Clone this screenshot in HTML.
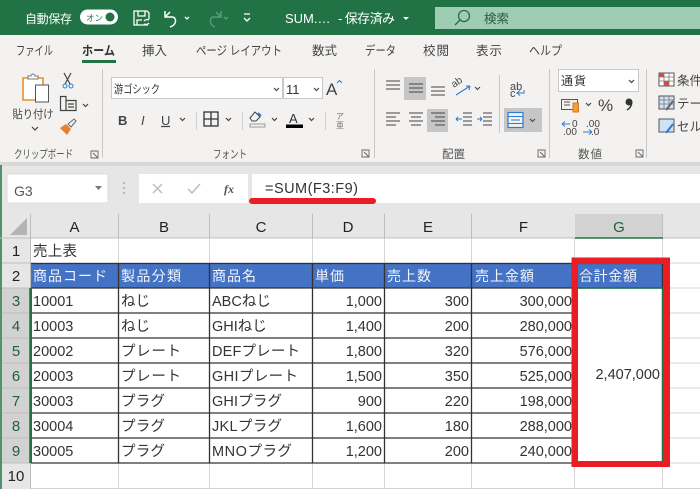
<!DOCTYPE html>
<html lang="ja"><head><meta charset="utf-8"><title>SUM</title>
<style>
html,body{margin:0;padding:0;background:#fff}
svg{display:block}
text{font-family:"Liberation Sans","Noto Sans CJK JP",sans-serif;fill:#333}
.t{font-size:12.5px;fill:#444}
.w{fill:#fff}
.c{font-size:14.5px;fill:#333}
.h{font-size:14px;fill:#f2f5fb}
.ch{font-size:15px;fill:#222;text-anchor:middle}
.rg{fill:#1f6040}
.ic{fill:none;stroke:#444;stroke-width:1.2}
</style></head><body>
<svg width="700" height="489" viewBox="0 0 700 489" xmlns="http://www.w3.org/2000/svg">
<rect width="700" height="489" fill="#e6e6e6"/>
<!-- title bar -->
<rect width="700" height="35" fill="#217346"/>
<rect x="435" y="7" width="265" height="22" fill="#9fcdb3"/>
<text class="w" x="25" y="23" style="font-size:12px" textLength="47">自動保存</text>
<rect x="80" y="9.500" width="38" height="15" rx="7.500" fill="#fff"/>
<text x="86" y="21" style="font-size:8.500px;fill:#217346">オン</text>
<circle cx="110" cy="17" r="4.500" fill="#217346"/>
<g fill="none" stroke="#fff" stroke-width="1.300">
<path d="M148 25H134V11H147L149 13V19M138 11V16H145V11M137 25V20H142"/>
<path d="M144 24a4 4 0 0 0 5 -1M144 21a4 4 0 0 1 5 -1"/>
<path d="M165 11V17H172C177 17 177 25 170 27M165 17L170 12" stroke-width="1.500"/>
<path d="M185 17l2 2 2-2M244 14h6M244 18l3 3 3-3"/>
<path d="M221 11V17H214C209 17 209 25 215 27M221 17L216 12" stroke="#5d9a78" stroke-width="1.500"/>
<path d="M224 17l2 2 2-2" stroke="#5d9a78"/>
</g>
<text class="w" x="285" y="23" style="font-size:13px">SUM.…</text>
<text class="w" x="338" y="23" style="font-size:13px" textLength="57">- 保存済み</text>
<path d="M403 17h6l-3 3z" fill="#fff"/>
<circle cx="464" cy="16" r="5.500" fill="none" stroke="#2f6b4a" stroke-width="1.300"/>
<path d="M460 20l-5 5" stroke="#2f6b4a" stroke-width="1.400"/>
<text x="484" y="23" style="font-size:12.500px;fill:#2f5b43">検索</text>

<!-- ribbon -->
<rect y="35" width="700" height="127" fill="#f3f2f1"/>
<rect y="162" width="700" height="4" fill="#d9d8d7"/>
<rect y="166" width="700" height="48" fill="#e7e6e6"/>
<text class="t" x="16" y="55" textLength="37" lengthAdjust="spacingAndGlyphs">ファイル</text>
<text x="82" y="55" style="font-size:12.500px;font-weight:700;fill:#333" textLength="33" lengthAdjust="spacingAndGlyphs">ホーム</text>
<rect x="82" y="60" width="34" height="3" fill="#217346"/>
<text class="t" x="142" y="55" textLength="25">挿入</text>
<text class="t" x="196" y="55" textLength="86" lengthAdjust="spacingAndGlyphs">ページ レイアウト</text>
<text class="t" x="312" y="55" textLength="25">数式</text>
<text class="t" x="365" y="55" textLength="31" lengthAdjust="spacingAndGlyphs">データ</text>
<text class="t" x="423" y="55" textLength="26">校閲</text>
<text class="t" x="476" y="55" textLength="26">表示</text>
<text class="t" x="529" y="55" textLength="33" lengthAdjust="spacingAndGlyphs">ヘルプ</text>

<!-- separators -->
<g stroke="#c8c8c8" stroke-width="1"><path d="M102.500 69V158M374.500 69V158M549.500 69V158M646.500 69V158M499.500 75V133"/></g>

<!-- clipboard -->
<path d="M23 78H43V100H23Z" fill="#fff" stroke="#e8912c" stroke-width="1.600"/>
<path d="M28 79V76H31a2 2 0 0 1 4 0h3V79Z" fill="#fff" stroke="#777"/>
<rect x="35.500" y="85" width="13" height="17" fill="#fff" stroke="#555"/>
<text x="12.500" y="118" style="font-size:11.500px;fill:#444" textLength="41" lengthAdjust="spacingAndGlyphs">貼り付け</text>
<path d="M32 127l3 3 3-3M83 104l2.500 2.500 2.500-2.500" class="ic"/>
<path d="M64 73l6 11M71 73l-6 11" class="ic"/>
<circle cx="65" cy="86" r="2" fill="none" stroke="#2b7cd3"/><circle cx="71" cy="86" r="2" fill="none" stroke="#2b7cd3"/>
<path d="M60.500 96.500H66V110.500H60.500ZM66 100.500H76V110.500H66ZM68 104H74M68 107H74" class="ic"/>
<path d="M60 128l6-4 5 5-4 6z" fill="#e8812c"/><path d="M68 124l6-5 2 2-5 6z" fill="none" stroke="#666"/>
<text x="14" y="158" style="font-size:11.500px;fill:#555" textLength="59" lengthAdjust="spacingAndGlyphs">クリップボード</text>
<path d="M91 151h7v7h-7zM93 153l5 5" fill="none" stroke="#666" stroke-width=".900"/>

<!-- font -->
<rect x="111.500" y="77.500" width="171" height="21" fill="#fff" stroke="#c8c8c8"/>
<rect x="283.500" y="77.500" width="39" height="21" fill="#fff" stroke="#c8c8c8"/>
<text x="114" y="93" style="font-size:11.500px;fill:#333" textLength="46" lengthAdjust="spacingAndGlyphs">游ゴシック</text>
<text x="286" y="94" style="font-size:13px;fill:#333">11</text>
<path d="M274 88l2.500 2.500 2.500-2.500M314 88l2.500 2.500 2.500-2.500" class="ic"/>
<text x="326" y="95" style="font-size:17px;fill:#444">A</text>
<path d="M337 83l2.500-2.500 2.500 2.500" fill="none" stroke="#2b7cd3"/>
<text x="118" y="125" style="font-size:13px;font-weight:700;fill:#444">B</text>
<text x="141" y="125" style="font-size:13px;font-style:italic;fill:#444">I</text>
<text x="161" y="125" style="font-size:13px;fill:#444">U</text>
<path d="M161 126.500h9M180 118l2.500 2.500 2.500-2.500M226 118l2.500 2.500 2.500-2.500M272 118l2.500 2.500 2.500-2.500M309 118l2.500 2.500 2.500-2.500" class="ic"/>
<rect x="204" y="112" width="14" height="14" fill="none" stroke="#333" stroke-width="1.300"/>
<path d="M211 112V126M204 119H218" stroke="#333" stroke-width="1.300"/>
<path d="M250 118l5-6 5 5-4 4h-4z" fill="none" stroke="#444"/><path d="M258 113l3 3" stroke="#2b7cd3" stroke-width="2"/>
<rect x="250" y="124" width="15" height="3" fill="#f3f2f1" stroke="#999"/>
<text x="289" y="123" style="font-size:13px;fill:#333">A</text>
<rect x="286" y="124.500" width="17" height="3.500" fill="#000"/>
<text x="336" y="119" style="font-size:8px;fill:#777">ア</text><text x="336" y="128" style="font-size:8px;fill:#777">亜</text>
<path d="M196.500 112V130M242.500 112V130M325.500 112V130" stroke="#d0d0d0"/>
<text x="213" y="158" style="font-size:11.500px;fill:#555" textLength="34" lengthAdjust="spacingAndGlyphs">フォント</text>
<path d="M362 150h7v7h-7zM364 152l5 5" fill="none" stroke="#666" stroke-width=".900"/>

<!-- alignment -->
<rect x="404" y="77" width="22" height="23" fill="#c6c6c6"/>
<rect x="427" y="109" width="21" height="23" fill="#c6c6c6"/>
<g stroke="#444" stroke-width="1.100" fill="none">
<path d="M386 81h14M386 85h14M386 89h14M409 84h14M409 88h14M409 92h14M431 87h14M431 91h14M431 95h14"/>
<path d="M386 113h14M386 117h10M386 121h14M386 125h10M409 113h14M411 117h10M409 121h14M411 125h10M431 113h14M435 117h10M431 121h14M435 125h10"/>
<path d="M463 113h9M463 117h9M463 121h9M463 125h9M483 113h9M483 117h9M483 121h9M483 125h9"/>
<path d="M456 119h6M456 119l2-2M456 119l2 2M477 119h5M482 119l-2-2M482 119l-2 2" stroke="#2b7cd3"/>
<path d="M456 95l14-9M470 86h-4M470 86l-1 4" stroke="#2b7cd3"/>
<path d="M475 87l2.500 2.500 2.500-2.500"/>
</g>
<text x="454" y="88" transform="rotate(-35 454 88)" style="font-size:10px;fill:#444">ab</text>
<text x="510" y="90" style="font-size:11px;fill:#444">ab</text>
<text x="510" y="97" style="font-size:11px;fill:#444">c</text>
<path d="M524 90v3h-7l3-2.500M517 93l3 2.500" fill="none" stroke="#2b7cd3"/>
<rect x="504" y="108" width="38" height="24" fill="#c6c6c6"/>
<rect x="508" y="112.500" width="15" height="15" fill="#f3f2f1" stroke="#2b7cd3" stroke-width="1.200"/>
<path d="M508 116.500h15M508 123.500h15M511 120h9" stroke="#2b7cd3"/>
<path d="M530 119l2.500 2.500 2.500-2.500" fill="none" stroke="#444" stroke-width="1.100"/>
<text x="442" y="158" style="font-size:11.500px;fill:#555" textLength="23">配置</text>
<path d="M538 150h7v7h-7zM540 152l5 5" fill="none" stroke="#666" stroke-width=".900"/>

<!-- number -->
<rect x="558.500" y="69.500" width="80" height="22" fill="#fff" stroke="#c8c8c8"/>
<text x="561" y="85" style="font-size:12px;fill:#333" textLength="25">通貨</text>
<path d="M629 80l2.500 2.500 2.500-2.500M586 103l2.500 2.500 2.500-2.500" class="ic"/>
<rect x="561.500" y="99.500" width="16" height="10" fill="none" stroke="#555"/>
<path d="M564 102h6M564 105h6" stroke="#555"/>
<rect x="573" y="103" width="5.500" height="9" fill="#f0a030" stroke="#d9762a"/>
<text x="598" y="111" style="font-size:17px;fill:#444">%</text>
<circle cx="629" cy="102" r="3.500" fill="#333"/>
<path d="M631.500 102c.5 3-1.500 6.500-4.500 8" fill="none" stroke="#333" stroke-width="1.500"/>
<text x="572" y="127" style="font-size:10px;fill:#444">0</text><text x="563" y="135" style="font-size:10px;fill:#444">.00</text>
<text x="586" y="127" style="font-size:10px;fill:#444">.00</text><text x="591" y="135" style="font-size:10px;fill:#444">.0</text>
<path d="M562 124h8M562 124l3-2.500M562 124l3 2.500M583 132h9M592 132l-3-2.500M592 132l-3 2.500" fill="none" stroke="#2b7cd3"/>
<text x="578" y="158" style="font-size:11.500px;fill:#555" textLength="24">数値</text>
<path d="M636 150h7v7h-7zM638 152l5 5" fill="none" stroke="#666" stroke-width=".900"/>

<!-- styles -->
<rect x="659" y="73" width="15" height="13" fill="#fff" stroke="#555"/>
<rect x="659" y="73" width="5" height="4" fill="#e94040"/><rect x="664" y="81" width="5" height="5" fill="#e94040"/>
<path d="M664 73V86M669 73V86M659 77H674M659 81H674" stroke="#777" stroke-width=".800"/>
<rect x="659" y="96" width="15" height="13" fill="#cfe2f5" stroke="#555"/>
<path d="M664 96V109M669 96V109M659 100H674M659 104H674" stroke="#777" stroke-width=".800"/>
<path d="M666 110l7-9" stroke="#666" stroke-width="2"/>
<rect x="659" y="119" width="15" height="13" fill="#cfe2f5" stroke="#555"/>
<path d="M666 133l7-9" stroke="#2b7cd3" stroke-width="2"/>
<text x="677" y="85" style="font-size:12.500px;fill:#444">条件</text>
<text x="677" y="108" style="font-size:12.500px;fill:#444">テーブ</text>
<text x="677" y="131" style="font-size:12.500px;fill:#444">セルの</text>

<!-- formula bar -->
<rect x="7" y="174" width="101" height="29" fill="#fff" stroke="#dcdcdc"/>
<text x="14" y="196" style="font-size:14px;fill:#555">G3</text>
<path d="M95 186h7l-3.500 4z" fill="#777"/>
<g fill="#aaa"><circle cx="124" cy="183" r="1"/><circle cx="124" cy="188" r="1"/><circle cx="124" cy="193" r="1"/></g>
<rect x="139" y="174" width="109" height="29" fill="#fff"/>
<path d="M153 184l9 9M162 184l-9 9" stroke="#bdbdbd" stroke-width="1.500"/>
<path d="M188 189l4 4 8-9" fill="none" stroke="#bdbdbd" stroke-width="1.500"/>
<text x="224" y="193" style="font-size:12px;font-style:italic;font-weight:700;fill:#555;font-family:'Liberation Serif',serif">fx</text>
<rect x="252" y="174" width="448" height="29" fill="#fff"/>
<text x="265" y="193" style="font-size:14.500px;fill:#333" textLength="93">=SUM(F3:F9)</text>
<rect x="249" y="198" width="127" height="6" rx="3" fill="#ea1c24"/>

<!-- sheet -->
<rect y="214" width="700" height="275" fill="#fff"/>
<rect y="214" width="700" height="24" fill="#e6e6e6"/>
<rect x="0" y="238" width="31" height="251" fill="#e6e6e6"/>
<rect x="2" y="288" width="28.500" height="175" fill="#d2d2d2"/>
<rect x="575" y="214" width="88" height="24" fill="#d2d2d2"/>
<rect x="0" y="165" width="2" height="324" fill="#217346" opacity=".75"/>
<path d="M10 235H27V218Z" fill="#b4b4b4"/>

<!-- light grid -->
<g stroke="#d4d4d4" stroke-width="1">
<path d="M118.500 238V263M209.500 238V263M312.500 238V263M384.500 238V263M471.500 238V263M574.500 238V263M662.500 238V489"/>
<path d="M118.500 463V489M209.500 463V489M312.500 463V489M384.500 463V489M471.500 463V489M574.500 463V489"/>
<path d="M31 263H700M663 288H700M663 313H700M663 338H700M663 363H700M663 388H700M663 413H700M663 438H700M663 463H700M31 488.500H700"/>
</g>
<g stroke="#bdbdbd" stroke-width="1">
<path d="M30.500 214V489M118.500 214V238M209.500 214V238M312.500 214V238M384.500 214V238M471.500 214V238M662.500 214V238M0 238H700M2 263H30M2 288H30M2 313H30M2 338H30M2 363H30M2 388H30M2 413H30M2 438H30M2 463H30"/>
</g>

<!-- blue header -->
<rect x="31" y="263" width="632" height="25" fill="#4472c4"/>
<!-- table grid -->
<g stroke="#333" stroke-width="1.300">
<path d="M31 263.500H663M31 288H663M31 313H574M31 338H574M31 363H574M31 388H574M31 413H574M31 438H574M31 463H663"/>
<path d="M118.500 263V463M209.500 263V463M312.500 263V463M384.500 263V463M471.500 263V463M662.500 263V288"/>
</g>
<path d="M31 288V463" stroke="#217346" stroke-width="2"/>
<path d="M575 238H663M30 288V463" stroke="#217346" stroke-width="1.500"/>
<path d="M578 288H663M662.500 288V461" stroke="#217346" stroke-width="1.500"/>

<!-- column headers -->
<text class="ch" x="74.500" y="232">A</text>
<text class="ch" x="164" y="232">B</text>
<text class="ch" x="261" y="232">C</text>
<text class="ch" x="348" y="232">D</text>
<text class="ch" x="428" y="232">E</text>
<text class="ch" x="523.500" y="232">F</text>
<text class="ch rg" x="619" y="232">G</text>
<!-- row headers -->
<text class="ch" x="16" y="256">1</text><text class="ch" x="16" y="281">2</text>
<text class="ch rg" x="16" y="306">3</text><text class="ch rg" x="16" y="331">4</text>
<text class="ch rg" x="16" y="356">5</text><text class="ch rg" x="16" y="381">6</text>
<text class="ch rg" x="16" y="406">7</text><text class="ch rg" x="16" y="431">8</text>
<text class="ch rg" x="16" y="456">9</text><text class="ch" x="16" y="481">10</text>

<!-- cells -->
<text class="c" x="33" y="256" textLength="44">売上表</text>
<text class="h" x="33" y="281" textLength="74">商品コード</text>
<text class="h" x="121" y="281" textLength="60">製品分類</text>
<text class="h" x="212" y="281" textLength="44">商品名</text>
<text class="h" x="315" y="281" textLength="29">単価</text>
<text class="h" x="387" y="281" textLength="44">売上数</text>
<text class="h" x="475" y="281" textLength="59">売上金額</text>
<text class="h" x="579" y="281" textLength="58">合計金額</text>

<text class="c" x="33" y="306">10001</text><text class="c" x="121" y="306">ねじ</text><text class="c" x="212" y="306">ABCねじ</text>
<text class="c" x="33" y="331">10003</text><text class="c" x="121" y="331">ねじ</text><text class="c" x="212" y="331">GHIねじ</text>
<text class="c" x="33" y="356">20002</text><text class="c" x="121" y="356" textLength="60">プレート</text><text class="c" x="212" y="356" textLength="88">DEFプレート</text>
<text class="c" x="33" y="381">20003</text><text class="c" x="121" y="381" textLength="60">プレート</text><text class="c" x="212" y="381" textLength="86">GHIプレート</text>
<text class="c" x="33" y="406">30003</text><text class="c" x="121" y="406" textLength="44">プラグ</text><text class="c" x="212" y="406" textLength="70">GHIプラグ</text>
<text class="c" x="33" y="431">30004</text><text class="c" x="121" y="431" textLength="44">プラグ</text><text class="c" x="212" y="431" textLength="70">JKLプラグ</text>
<text class="c" x="33" y="456">30005</text><text class="c" x="121" y="456" textLength="44">プラグ</text><text class="c" x="212" y="456" textLength="80">MNOプラグ</text>

<g style="text-anchor:end">
<text class="c" x="382" y="306">1,000</text><text class="c" x="469" y="306">300</text><text class="c" x="572" y="306">300,000</text>
<text class="c" x="382" y="331">1,400</text><text class="c" x="469" y="331">200</text><text class="c" x="572" y="331">280,000</text>
<text class="c" x="382" y="356">1,800</text><text class="c" x="469" y="356">320</text><text class="c" x="572" y="356">576,000</text>
<text class="c" x="382" y="381">1,500</text><text class="c" x="469" y="381">350</text><text class="c" x="572" y="381">525,000</text>
<text class="c" x="382" y="406">900</text><text class="c" x="469" y="406">220</text><text class="c" x="572" y="406">198,000</text>
<text class="c" x="382" y="431">1,600</text><text class="c" x="469" y="431">180</text><text class="c" x="572" y="431">288,000</text>
<text class="c" x="382" y="456">1,200</text><text class="c" x="469" y="456">200</text><text class="c" x="572" y="456">240,000</text>
<text class="c" x="660" y="379">2,407,000</text>
</g>

<!-- red highlight -->
<path fill-rule="evenodd" d="M571.500 257.500H670V467H571.500ZM578 264V461H663V264Z" fill="#ea1c24"/>
</svg>
</body></html>
